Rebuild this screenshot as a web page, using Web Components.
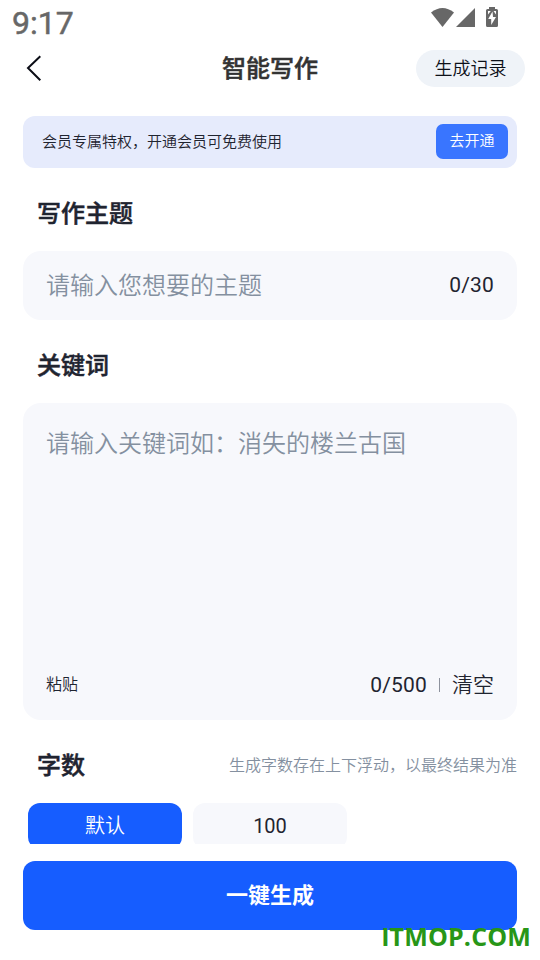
<!DOCTYPE html>
<html lang="zh-CN">
<head>
<meta charset="utf-8">
<title>智能写作</title>
<style>
html,body{margin:0;padding:0;background:#fff}
body{width:540px;height:960px;overflow:hidden;font-family:Roboto,"Noto Sans CJK SC DemiLight","Noto Sans CJK SC",sans-serif;font-weight:350;color:#1f2430}
</style>
</head>
<body>
<writer-app></writer-app>
<script>
function define(name, html){
  const t = document.createElement('template');
  t.innerHTML = html;
  customElements.define(name, class extends HTMLElement{
    constructor(){
      super();
      this.attachShadow({mode:'open'}).appendChild(t.content.cloneNode(true));
    }
  });
}

define('status-bar', `
<style>
:host{display:flex;justify-content:space-between;height:44px;box-sizing:border-box;padding:0 41px 0 12px;color:#676767}
.time{font-size:32px;line-height:46px;font-weight:400;-webkit-text-stroke:.5px #676767;height:44px}
svg{display:block;margin-top:6px}
</style>
<span class="time">9:17</span>
<svg width="69" height="24" viewBox="430 6 69 24" fill="#676767">
<path d="M431 12.4Q442.500 3.400 454 12.400L442.500 27Z"/>
<path d="M475 8V27H456Z"/>
<path fill-rule="evenodd" d="M489 7h6v2h1.500q1.500 0 1.500 1.500V25.500q0 1.500-1.500 1.500h-9q-1.500 0-1.500-1.500v-15q0-1.500 1.500-1.500h1.500zM488 11v3.600l2.800-3.600zM492.500 11.500l-4.300 7.600h3V25l4.800-8h-3zM493.500 11l2.500 3.600V11z"/>
</svg>`);

define('nav-bar', `
<style>
:host{display:grid;grid-template-columns:1fr auto 1fr;align-items:center;height:49px;padding:0 15px}
.back{display:block;margin:-2px 0 0 8px}
.title{font-family:Roboto,"Noto Sans CJK SC",sans-serif;font-size:24px;font-weight:500;-webkit-text-stroke:.5px;line-height:36px;color:#333}
.records{justify-self:end;width:109px;height:37px;border-radius:19px;background:#eff3f8;color:#0d1018;font-size:18px;line-height:37px;text-align:center}
</style>
<svg class="back" width="24" height="32" viewBox="0 0 24 32" fill="none" stroke="#0b0d16" stroke-width="2"><path d="M17.300 4.200 5 16 17.300 28.300"/></svg>
<span class="title"><slot></slot></span>
<span class="records"><slot name="action"></slot></span>`);

define('member-banner', `
<style>
:host{display:flex;align-items:flex-start;justify-content:space-between;height:52px;box-sizing:border-box;padding:8px 9px 0 19px;border-radius:12px;background:#e6ebfc;font-size:15px;line-height:36px}
.go{width:72px;height:35px;border-radius:7px;background:#3975ff;color:#fff;text-align:center;line-height:35px}
</style>
<span><slot></slot></span><span class="go"><slot name="action"></slot></span>`);

define('section-title', `
<style>
:host{display:flex;justify-content:space-between;height:36px;padding-left:14px;font-family:Roboto,"Noto Sans CJK SC",sans-serif;font-size:24px;font-weight:500;line-height:38px}
.name{-webkit-text-stroke:.5px}
::slotted([slot=note]){font-family:Roboto,"Noto Sans CJK SC DemiLight","Noto Sans CJK SC",sans-serif;font-size:16px;font-weight:350;color:#8490a0}
</style>
<span class="name"><slot></slot></span><slot name="note"></slot>`);

define('topic-field', `
<style>
:host{display:flex;justify-content:space-between;height:69px;box-sizing:border-box;padding:0 23px;border-radius:18px;background:#f7f8fc;font-size:24px;line-height:70px}
.hint{color:#8490a0}
.count{font-size:21px;letter-spacing:.2px;font-weight:400;line-height:69px}
</style>
<span class="hint"><slot></slot></span><span class="count"><slot name="count"></slot></span>`);

define('keyword-field', `
<style>
:host{display:flex;flex-direction:column;justify-content:space-between;height:317px;box-sizing:border-box;padding:23px 23px 19px;border-radius:18px;background:#f7f8fc}
.hint{font-size:24px;line-height:36px;color:#8490a0}
.tools{display:flex;align-items:center;height:32px;font-size:21px;line-height:32px}
.paste{font-size:16px;margin-right:auto}
.count{font-weight:400;letter-spacing:.2px}
.line{width:1px;height:14px;background:#8d929d;margin:0 12px}
</style>
<span class="hint"><slot></slot></span>
<div class="tools"><span class="paste"><slot name="paste"></slot></span><span class="count"><slot name="count"></slot></span><i class="line"></i><span><slot name="clear"></slot></span></div>`);

define('count-option', `
<style>
:host{display:block;width:154px;height:46px;border-radius:12px;background:#f7f8fc;font-size:20px;font-weight:400;line-height:46px;text-align:center}
:host([selected]){background:#165dff;color:#fff;font-weight:350}
</style><slot></slot>`);

define('generate-button', `
<style>
:host{display:block;height:69px;border-radius:12px;background:#165dff;color:#fff;font-family:Roboto,"Noto Sans CJK SC",sans-serif;font-size:22px;font-weight:700;line-height:69px;text-align:center}
</style><slot></slot>`);

define('site-mark', `
<style>
:host{position:absolute;right:9px;bottom:7px;font:700 25px/34px "Open Sans",sans-serif;letter-spacing:.15px;color:#289617;white-space:nowrap}
</style><slot></slot>`);

define('writer-app', `
<style>
:host{display:block;position:relative;width:540px;height:960px;overflow:hidden;background:#fff}
main{display:flex;flex-direction:column;padding:23px 23px 0}
section-title{margin:27px 0 20px}
.options{display:flex;gap:11px;height:41px;padding-left:5px;overflow:hidden}
generate-button{margin-top:17px}
</style>
<status-bar></status-bar>
<nav-bar>智能写作<span slot="action">生成记录</span></nav-bar>
<main>
<member-banner>会员专属特权，开通会员可免费使用<span slot="action">去开通</span></member-banner>
<section-title>写作主题</section-title>
<topic-field>请输入您想要的主题<span slot="count">0/30</span></topic-field>
<section-title>关键词</section-title>
<keyword-field>请输入关键词如：消失的楼兰古国<span slot="paste">粘贴</span><span slot="count">0/500</span><span slot="clear">清空</span></keyword-field>
<section-title>字数<span slot="note">生成字数存在上下浮动，以最终结果为准</span></section-title>
<div class="options"><count-option selected>默认</count-option><count-option>100</count-option></div>
<generate-button>一键生成</generate-button>
</main>
<site-mark>ITMOP.COM</site-mark>`);
</script>
</body>
</html>
